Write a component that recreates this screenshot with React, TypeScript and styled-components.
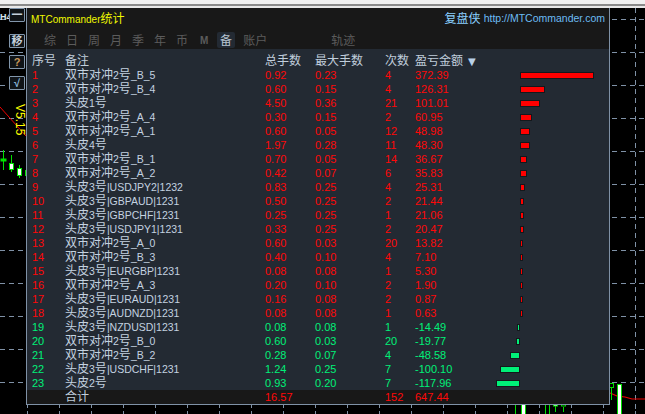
import styled, { createGlobalStyle } from 'styled-components';

const GlobalStyle = createGlobalStyle`
  html, body {
    margin: 0;
    padding: 0;
    background: #000;
  }
  body {
    font-family: 'Liberation Sans', 'Noto Sans CJK SC', sans-serif;
    font-size: 12px;
  }
`;

const Page = styled.div`
  width: 645px;
  height: 414px;
  display: flex;
  flex-direction: column;
  overflow: hidden;
`;

const WindowStrip = styled.div`
  height: 4px;
  background: #f0f0f0;
  border-bottom: 2px solid #8a8a8a;
  box-shadow: 0 2px 0 #e8e8e8;
  margin-bottom: 2px;
  flex: none;
`;

const Desktop = styled.div`
  position: relative;
  flex: 1;
  background: #000;
`;

const ChartSvg = styled.svg`
  position: absolute;
  inset: 0;
`;

const PeriodLabel = styled.span`
  position: absolute;
  left: 0;
  top: 4px;
  color: #d8e8f0;
  font-size: 9px;
  font-weight: bold;
`;

const VersionLabel = styled.span`
  position: absolute;
  left: 13px;
  top: 96px;
  color: #ffff00;
  writing-mode: vertical-rl;
  line-height: 14px;
`;

const SideTools = styled.div`
  position: absolute;
  left: 9px;
  top: 0;
  display: flex;
  flex-direction: column;
  gap: 7px;
`;

const ToolButton = styled.div<{ $color?: string; $spaced?: boolean }>`
  width: 14px;
  height: 12px;
  border: 1px solid #8296ab;
  border-radius: 1px;
  background: #101418;
  color: ${(p) => p.$color ?? '#c4d0dc'};
  font-size: 11px;
  font-weight: bold;
  line-height: 12px;
  text-align: center;
  margin-bottom: ${(p) => (p.$spaced ? '5px' : '0')};
`;

const Panel = styled.div`
  position: absolute;
  left: 26px;
  top: 0;
  width: 582px;
  height: 396px;
  border: solid #7f91a6;
  border-width: 0 1px 1px;
  background: #232a33;
  display: flex;
  flex-direction: column;
`;

const TopBlock = styled.div`
  background: #181818;
  height: 41px;
  flex: none;
`;

const TitleRow = styled.div`
  height: 19px;
  padding: 0 4px;
  display: flex;
  align-items: center;
  justify-content: space-between;
`;

const Title = styled.span`
  color: #f0f800;
`;

const Brand = styled.div`
  display: flex;
  align-items: center;
  gap: 3px;
  color: #6cbcf4;
`;

const BrandName = styled.span`
  color: #8ad0ff;
`;

// latin runs in the terminal font are narrower than the cjk around them
const Latin = styled.span<{ $size?: number }>`
  font-size: ${(p) => p.$size ?? 10.5}px;
`;

const TabRow = styled.div`
  margin-top: 5px;
  padding-left: 14px;
  display: flex;
  gap: 4px;
`;

const Tab = styled.div<{ $active?: boolean; $offset?: number; $small?: boolean }>`
  height: 16px;
  min-width: 18px;
  padding: 1px 3px 0;
  box-sizing: border-box;
  margin-left: ${(p) => p.$offset ?? 0}px;
  border-radius: 2px;
  text-align: center;
  line-height: 16px;
  font-size: ${(p) => (p.$small ? '10px' : '12px')};
  font-weight: ${(p) => (p.$small ? 'bold' : 'normal')};
  color: ${(p) => (p.$active ? '#b8c4d0' : '#5c5c5c')};
  background: ${(p) => (p.$active ? '#232a33' : 'transparent')};
`;

const Table = styled.div`
  flex: 1;
  padding-top: 5px;
  display: flex;
  flex-direction: column;
`;

const Row = styled.div<{ $tone?: 'head' | 'loss' | 'gain' }>`
  display: grid;
  grid-template-columns: 33px 200px 50px 70px 30px 55px 50px 1fr;
  height: 14px;
  padding-left: 5px;
  line-height: 14px;
  white-space: nowrap;
  font-size: 11px;
  color: ${(p) => (p.$tone === 'gain' ? '#00f078' : p.$tone === 'loss' ? '#ff0808' : '#c0cedc')};
`;

const HeadCell = styled.span`
  font-size: 12px;
`;

const SortMark = styled.span`
  color: #b8d0e8;
  font-family: 'DejaVu Sans', sans-serif;
  font-size: 10px;
  margin-left: 5px;
`;

const Note = styled.span`
  color: #c4d2e0;
  font-size: 12px;
`;

const BarSlot = styled.div<{ $side: 'neg' | 'pos' }>`
  display: flex;
  align-items: center;
  justify-content: ${(p) => (p.$side === 'neg' ? 'flex-end' : 'flex-start')};
`;

const Bar = styled.div<{ $gain?: boolean }>`
  height: 7px;
  box-sizing: border-box;
  border: 1px solid #14181c;
  background: ${(p) => (p.$gain ? '#00f078' : '#ff0000')};
`;

const TotalRow = styled(Row)`
  margin-top: auto;
  background: #181818;
  color: #ff0808;
`;

const TotalLabel = styled.span`
  color: #c0cedc;
  font-size: 12px;
`;

type Trade = [string, string, string, number];

const trades: Trade[] = [
  ['双市对冲2号_B_5', '0.92', '0.23', 4],
  ['双市对冲2号_B_4', '0.60', '0.15', 4],
  ['头皮1号', '4.50', '0.36', 21],
  ['双市对冲2号_A_4', '0.30', '0.15', 2],
  ['双市对冲2号_A_1', '0.60', '0.05', 12],
  ['头皮4号', '1.97', '0.28', 11],
  ['双市对冲2号_B_1', '0.70', '0.05', 14],
  ['双市对冲2号_A_2', '0.42', '0.07', 6],
  ['头皮3号|USDJPY2|1232', '0.83', '0.25', 4],
  ['头皮3号|GBPAUD|1231', '0.50', '0.25', 2],
  ['头皮3号|GBPCHF|1231', '0.25', '0.25', 1],
  ['头皮3号|USDJPY1|1231', '0.33', '0.25', 2],
  ['双市对冲2号_A_0', '0.60', '0.03', 20],
  ['双市对冲2号_B_3', '0.40', '0.10', 4],
  ['头皮3号|EURGBP|1231', '0.08', '0.08', 1],
  ['双市对冲2号_A_3', '0.20', '0.10', 2],
  ['头皮3号|EURAUD|1231', '0.16', '0.08', 2],
  ['头皮3号|AUDNZD|1231', '0.08', '0.08', 1],
  ['头皮3号|NZDUSD|1231', '0.08', '0.08', 1],
  ['双市对冲2号_B_0', '0.60', '0.03', 20],
  ['双市对冲2号_B_2', '0.28', '0.07', 4],
  ['头皮3号|USDCHF|1231', '1.24', '0.25', 7],
  ['头皮2号', '0.93', '0.20', 7],
];

const profits = [
  '372.39', '126.31', '101.01', '60.95', '48.98', '48.30', '36.67', '35.83', '25.31', '21.44', '21.06', '20.47',
  '13.82', '7.10', '5.30', '1.90', '0.87', '0.63', '-14.49', '-19.77', '-48.58', '-100.10', '-117.96',
];

const tabs = ['综', '日', '周', '月', '季', '年', '币'];

const barWidth = (value: number) => Math.max(3, Math.round(Math.abs(value) * 0.2));

const noteParts = (note: string) =>
  note.split(/([\x00-\x7f]+)/).map((part, i) => (i % 2 ? <Latin key={i}>{part}</Latin> : part));

const gridRows = Array.from({ length: 12 }, (_, i) => 11 + i * 33);
const tickCols = Array.from({ length: 20 }, (_, i) => 27 + i * 32);

const Chart = () => (
  <ChartSvg width="645" height="406" viewBox="0 0 645 406">
    {gridRows.map((y) => (
      <line key={y} x1="0" x2="645" y1={y + 0.5} y2={y + 0.5} stroke="#7f91a6" strokeDasharray="5 4" />
    ))}
    <line x1="635.5" x2="635.5" y1="0" y2="406" stroke="#7f91a6" strokeDasharray="5 4" />
    {tickCols.map((x) => (
      <line key={x} x1={x + 0.5} x2={x + 0.5} y1="397" y2="406" stroke="#7f91a6" strokeDasharray="3 3" />
    ))}
    <polyline points="0,99 26,128" fill="none" stroke="#f00000" />
    <polyline points="610,385 617,388 625,389 632,391 645,391" fill="none" stroke="#f00000" strokeWidth="1.2" />
    <g stroke="#00e000" fill="none">
      <line x1="3.5" x2="3.5" y1="142" y2="162" />
      <rect x="1" y="151" width="5" height="2" fill="#00e000" />
      <line x1="11.5" x2="11.5" y1="147" y2="164" />
      <rect x="9.5" y="155.5" width="4" height="6" fill="#fff" />
      <line x1="19.5" x2="19.5" y1="157" y2="170" />
      <rect x="17.5" y="160.5" width="4" height="7" fill="#fff" />
      <line x1="25.5" x2="25.5" y1="162" y2="168" />
      <line x1="515.5" x2="515.5" y1="397" y2="406" />
      <rect x="521.5" y="394" width="4" height="14" fill="#fff" />
      <line x1="545.5" x2="545.5" y1="397" y2="406" />
      <line x1="549.5" x2="549.5" y1="397" y2="406" />
      <line x1="555.5" x2="555.5" y1="398" y2="404" />
      <rect x="553.5" y="394" width="4" height="4" fill="#fff" />
      <line x1="563.5" x2="563.5" y1="399" y2="404" />
      <rect x="561.5" y="394" width="4" height="4" fill="#000" />
      <line x1="611.5" x2="611.5" y1="379" y2="392" />
      <rect x="609.5" y="375.5" width="4" height="4" fill="#000" />
      <rect x="617.5" y="376.5" width="4" height="32" fill="#fff" />
    </g>
  </ChartSvg>
);

export default function App() {
  return (
    <Page>
      <GlobalStyle />
      <WindowStrip />
      <Desktop>
        <Chart />
        <PeriodLabel>H4</PeriodLabel>
        <VersionLabel>V5.15</VersionLabel>
        <SideTools>
          <ToolButton $spaced>一</ToolButton>
          <ToolButton>移</ToolButton>
          <ToolButton $color="#c89858">?</ToolButton>
          <ToolButton $color="#88b4d8">√</ToolButton>
        </SideTools>
        <Panel>
          <TopBlock>
            <TitleRow>
              <Title>
                <Latin $size={10}>MTCommander</Latin>统计
              </Title>
              <Brand>
                <BrandName>复盘侠</BrandName>
                <Latin>http://MTCommander.com</Latin>
              </Brand>
            </TitleRow>
            <TabRow>
              {tabs.map((tab) => (
                <Tab key={tab}>{tab}</Tab>
              ))}
              <Tab $small>M</Tab>
              <Tab $active>备</Tab>
              <Tab $offset={1}>账户</Tab>
              <Tab $offset={54}>轨迹</Tab>
            </TabRow>
          </TopBlock>
          <Table>
            <Row>
              <HeadCell>序号</HeadCell>
              <HeadCell>备注</HeadCell>
              <HeadCell>总手数</HeadCell>
              <HeadCell>最大手数</HeadCell>
              <HeadCell>次数</HeadCell>
              <HeadCell>
                盈亏金额<SortMark>▼</SortMark>
              </HeadCell>
            </Row>
            {trades.map(([note, lots, maxLots, count], i) => {
              const value = parseFloat(profits[i]);
              const gain = value < 0;
              return (
                <Row key={note} $tone={gain ? 'gain' : 'loss'}>
                  <span>{i + 1}</span>
                  <Note>{noteParts(note)}</Note>
                  <span>{lots}</span>
                  <span>{maxLots}</span>
                  <span>{count}</span>
                  <span>{profits[i]}</span>
                  <BarSlot $side="neg">
                    {gain && <Bar $gain style={{ width: barWidth(value) }} />}
                  </BarSlot>
                  <BarSlot $side="pos">{!gain && <Bar style={{ width: barWidth(value) }} />}</BarSlot>
                </Row>
              );
            })}
            <TotalRow>
              <span />
              <TotalLabel>合计</TotalLabel>
              <span>16.57</span>
              <span />
              <span>152</span>
              <span>647.44</span>
            </TotalRow>
          </Table>
        </Panel>
      </Desktop>
    </Page>
  );
}
